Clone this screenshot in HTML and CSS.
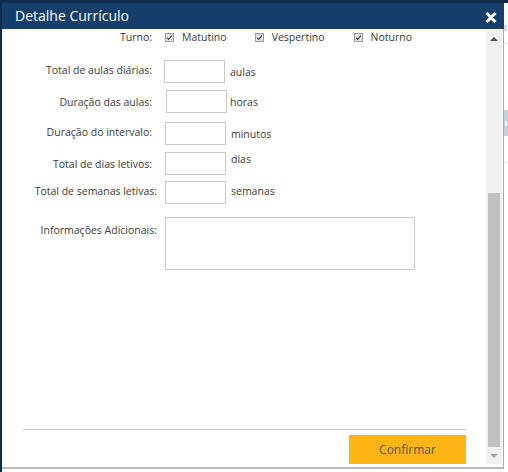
FILE: index.html
```html
<!DOCTYPE html>
<html lang="pt-BR">
<head>
<meta charset="utf-8">
<title>Detalhe Currículo</title>
<link rel="stylesheet" href="styles.css">
</head>
<body>
<div class="screen">
  <div class="topband"></div>
  <div class="main">
    <div class="dialog">
      <div class="header">
        <span class="title">Detalhe Currículo</span>
        <svg class="close" width="12" height="11" viewBox="0 0 12 11" aria-label="Fechar">
          <path d="M1.5 1 L10.5 10 M10.5 1 L1.5 10" stroke="#ffffff" stroke-width="3" fill="none"/>
        </svg>
      </div>
      <div class="body">
        <div class="content">
          <div class="form">
            <div class="row row-turno">
              <span class="lbl">Turno:</span>
              <label class="chk chk-first"><svg class="box" width="9" height="9" viewBox="0 0 9 9"><rect x="0.5" y="0.5" width="8" height="8" fill="#e6e6e6" stroke="#9a9a9a"/><path d="M2 4.6 L3.7 6.3 L7 2.6" stroke="#444" stroke-width="1.2" fill="none"/></svg>Matutino</label>
              <label class="chk chk-second"><svg class="box" width="9" height="9" viewBox="0 0 9 9"><rect x="0.5" y="0.5" width="8" height="8" fill="#e6e6e6" stroke="#9a9a9a"/><path d="M2 4.6 L3.7 6.3 L7 2.6" stroke="#444" stroke-width="1.2" fill="none"/></svg>Vespertino</label>
              <label class="chk chk-third"><svg class="box" width="9" height="9" viewBox="0 0 9 9"><rect x="0.5" y="0.5" width="8" height="8" fill="#e6e6e6" stroke="#9a9a9a"/><path d="M2 4.6 L3.7 6.3 L7 2.6" stroke="#444" stroke-width="1.2" fill="none"/></svg>Noturno</label>
            </div>
            <div class="row r1">
              <span class="lbl lbl-up">Total de aulas diárias:</span>
              <input class="num in-a" type="text">
              <span class="unit">aulas</span>
            </div>
            <div class="row r2">
              <span class="lbl">Duração das aulas:</span>
              <input class="num in-b" type="text">
              <span class="unit unit-b">horas</span>
            </div>
            <div class="row r3">
              <span class="lbl lbl-up">Duração do intervalo:</span>
              <input class="num" type="text">
              <span class="unit">minutos</span>
            </div>
            <div class="row r4">
              <span class="lbl">Total de dias letivos:</span>
              <input class="num" type="text">
              <span class="unit unit-top">dias</span>
            </div>
            <div class="row r5">
              <span class="lbl lbl-wide lbl-up">Total de semanas letivas:</span>
              <input class="num num-wide" type="text">
              <span class="unit unit-up">semanas</span>
            </div>
            <div class="row r6 row-top">
              <span class="lbl lbl-wide lbl-area">Informações Adicionais:</span>
              <textarea class="area"></textarea>
            </div>
          </div>
          <div class="footer">
            <button class="confirm" type="button">Confirmar</button>
          </div>
        </div>
        <div class="scrollbar">
          <div class="sb-btn"><span class="arrow-up"></span></div>
          <div class="sb-track"><div class="sb-thumb"></div></div>
          <div class="sb-btn"><span class="arrow-down"></span></div>
        </div>
      </div>
    </div>
    <div class="backdrop">
      <div class="bd-mark"></div>
      <div class="bd-line bd-line1"></div>
      <div class="bd-block"><span class="bd-dot"></span></div>
      <div class="bd-line bd-line2"></div>
    </div>
  </div>
</div>
</body>
</html>
```

FILE: styles.css
```css
html, body {
  margin: 0;
  padding: 0;
  background: #ffffff;
}

.screen {
  width: 508px;
  height: 472px;
  display: flex;
  flex-direction: column;
  overflow: hidden;
  font-family: "Open Sans", "Noto Sans", sans-serif;
  color: #3a3a3a;
}

.topband {
  height: 3px;
  flex: none;
  background: #0e2b4b;
}

.main {
  display: flex;
  flex: 1;
  min-height: 0;
}

.dialog {
  width: 502px;
  flex: none;
  display: flex;
  flex-direction: column;
  border-left: 2px solid #0e2b4b;
}

.header {
  height: 26px;
  flex: none;
  background: #153f6a;
  display: flex;
  align-items: center;
  justify-content: space-between;
  padding: 0 7px 0 13px;
}

.title {
  color: #ffffff;
  font-size: 14px;
  line-height: 18px;
  margin-top: -1px;
}

.close {
  display: block;
  margin-top: 2px;
}

.body {
  height: 438px;
  flex: none;
  display: flex;
  border-right: 1px solid #a9a9a9;
  border-bottom: 2px solid #b9b9b9;
}

.content {
  flex: 1;
  display: flex;
  flex-direction: column;
  min-width: 0;
}

.form {
  padding-top: 1px;
  font-size: 10.5px;
}

.row {
  display: flex;
  align-items: center;
}

.row-top {
  align-items: flex-start;
}

.row-turno {
  height: 14px;
  line-height: 14px;
}

.lbl {
  width: 150px;
  flex: none;
  text-align: right;
}

.lbl-wide {
  width: 155px;
}

.lbl-up {
  position: relative;
  top: -2px;
}

.lbl-area {
  padding-top: 6px;
}

.chk {
  display: flex;
  align-items: center;
}

.box {
  display: block;
  margin-right: 8px;
}

.chk-first {
  margin-left: 13px;
}

.chk-second {
  margin-left: 28px;
}

.chk-third {
  margin-left: 29px;
}

.num {
  box-sizing: border-box;
  width: 61px;
  height: 23px;
  margin: 0 0 0 13px;
  padding: 0;
  border: 1px solid #c9c9c9;
  background: #ffffff;
  font: inherit;
}

.in-a {
  margin-left: 12px;
}

.in-b {
  margin-left: 14px;
}

.num-wide {
  margin-left: 8px;
}

.unit {
  margin-left: 5px;
}

.unit-b {
  margin-left: 3px;
}

.unit-top {
  align-self: flex-start;
  margin-top: 0;
}

.unit-up {
  position: relative;
  top: -2px;
}

.r1 { margin-top: 16px; }
.r2 { margin-top: 7px; }
.r3 { margin-top: 9px; }
.r4 { margin-top: 7px; }
.r5 { margin-top: 6px; }
.r6 { margin-top: 13px; }

.area {
  box-sizing: border-box;
  width: 250px;
  height: 53px;
  margin: 0 0 0 8px;
  padding: 0;
  border: 1px solid #c9c9c9;
  background: #ffffff;
  resize: none;
  font: inherit;
}

.footer {
  margin: auto 20px 0 21px;
  border-top: 1px solid #c8c8c8;
  padding: 5px 0 3px;
  display: flex;
  justify-content: flex-end;
}

.confirm {
  width: 117px;
  height: 29px;
  border: none;
  margin: 0;
  padding: 0;
  background: #fdb515;
  color: #555555;
  font-family: "Open Sans", "Noto Sans", sans-serif;
  font-size: 12px;
}

.scrollbar {
  width: 16px;
  flex: none;
  margin: 1px 1px 3px 0;
  background: #f0f0f0;
  display: flex;
  flex-direction: column;
}

.sb-btn {
  height: 17px;
  flex: none;
  display: flex;
  align-items: center;
  justify-content: center;
}

.arrow-up {
  width: 0;
  height: 0;
  border-left: 4px solid transparent;
  border-right: 4px solid transparent;
  border-bottom: 4px solid #505050;
}

.arrow-down {
  width: 0;
  height: 0;
  border-left: 4px solid transparent;
  border-right: 4px solid transparent;
  border-top: 4px solid #a3a3a3;
}

.sb-track {
  flex: 1;
  display: flex;
  flex-direction: column;
  justify-content: flex-end;
  padding: 0 2px;
}

.sb-thumb {
  height: 254px;
  background: #c1c1c1;
}

.backdrop {
  flex: 1;
  background: #ffffff;
  display: flex;
  flex-direction: column;
  overflow: hidden;
}

.bd-mark {
  margin-top: 22px;
  width: 3px;
  height: 6px;
  background: #dcdcdc;
}

.bd-line {
  height: 1px;
  background: #ececec;
}

.bd-line1 {
  margin-top: 12px;
}

.bd-block {
  margin-top: 66px;
  height: 26px;
  background: #c3d2e2;
  display: flex;
  align-items: center;
}

.bd-dot {
  width: 2px;
  height: 5px;
  margin-left: 1px;
  background: #eef2f7;
}

.bd-line2 {
  margin-top: 26px;
}
```
